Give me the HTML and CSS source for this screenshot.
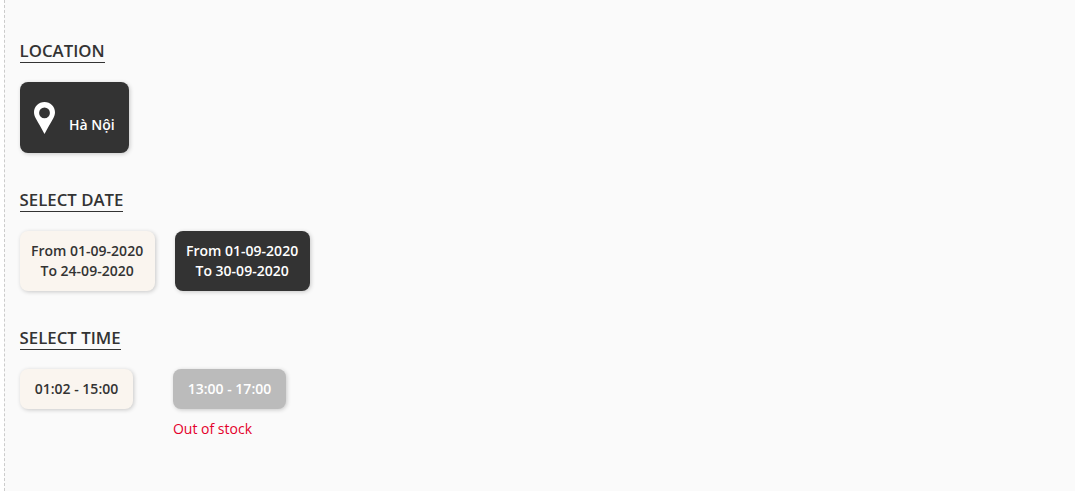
FILE: index.html
```html
<!DOCTYPE html>
<html lang="vi">
<head>
<meta charset="UTF-8">
<title>Select showtime</title>
<link rel="stylesheet" href="styles.css">
</head>
<body>
  <div class="panel">
    <section class="block block-location">
      <h3 class="block-title">LOCATION</h3>
      <div class="options">
        <div class="option option-dark option-location">
          <svg class="pin" viewBox="0 0 21 32" width="21" height="32">
            <path fill-rule="evenodd" fill="#fff" d="M10.500 0C4.700 0 0 4.600 0 10.300c0 2 .6 3.900 1.700 5.900 2.500 4.700 6.400 11 8.800 15.800 2.400-4.800 6.300-11.100 8.800-15.800 1.100-2 1.700-3.900 1.700-5.900C21 4.600 16.300 0 10.500 0zm0 5.500a5.400 5.400 0 1 1 0 10.800 5.400 5.400 0 0 1 0-10.800z"/>
          </svg>
          <span class="location-name">Hà Nội</span>
        </div>
      </div>
    </section>

    <section class="block block-date">
      <h3 class="block-title">SELECT DATE</h3>
      <div class="options options-date">
        <div class="option option-light option-date">From 01-09-2020<br>To 24-09-2020</div>
        <div class="option option-dark option-date">From 01-09-2020<br>To 30-09-2020</div>
      </div>
    </section>

    <section class="block block-time">
      <h3 class="block-title">SELECT TIME</h3>
      <div class="options options-time">
        <div class="time-item">
          <div class="option option-light option-time">01:02 - 15:00</div>
        </div>
        <div class="time-item">
          <div class="option option-off option-time">13:00 - 17:00</div>
          <p class="stock-note">Out of stock</p>
        </div>
      </div>
    </section>
  </div>
</body>
</html>
```

FILE: styles.css
```css
html, body {
  height: 100%;
}
body {
  margin: 0;
  font-family: 'Open Sans', sans-serif;
  color: #333;
  background: #fff;
  overflow: hidden;
}
.panel {
  box-sizing: border-box;
  height: 491px;
  margin-left: 4px;
  padding: 41px 0 0 14.6px;
  background: #fafafa;
  border-left: 1px dashed #ccc;
}
.block-title {
  display: table;
  margin: 0;
  font-size: 16.8px;
  line-height: 20px;
  font-weight: 600;
  color: #333;
  border-bottom: 1px solid #333;
  padding-bottom: 1px;
}
.options {
  display: flex;
  align-items: flex-start;
  margin-top: 19px;
}
.block-date {
  margin-top: 37px;
}
.block-time {
  margin-top: 37px;
}
.options-date {
  gap: 20px;
}
.options-time {
  gap: 40px;
  padding-left: 0.4px;
}
.option {
  box-sizing: border-box;
  border-radius: 8px;
  font-size: 14px;
  font-weight: 600;
  line-height: 20px;
  text-align: center;
  box-shadow: 1px 1px 4px rgba(0,0,0,0.2);
}
.option-dark {
  background: #333;
  color: #fff;
}
.option-light {
  background: #faf5ef;
  color: #333;
}
.option-off {
  background: #bbb;
  color: #fff;
}
.option-location {
  display: flex;
  width: 109px;
  height: 71px;
  padding: 19.500px 0 0 14.400px;
}
.pin {
  flex: none;
}
.location-name {
  margin: 13.500px 0 0 14px;
}
.option-date {
  width: 135px;
  height: 60px;
  padding-top: 10px;
}
.option-time {
  width: 113px;
  height: 40px;
  padding-top: 10px;
}
.stock-note {
  margin: 10px 0 0;
  font-size: 14px;
  line-height: 20px;
  color: #e4002b;
}
```
